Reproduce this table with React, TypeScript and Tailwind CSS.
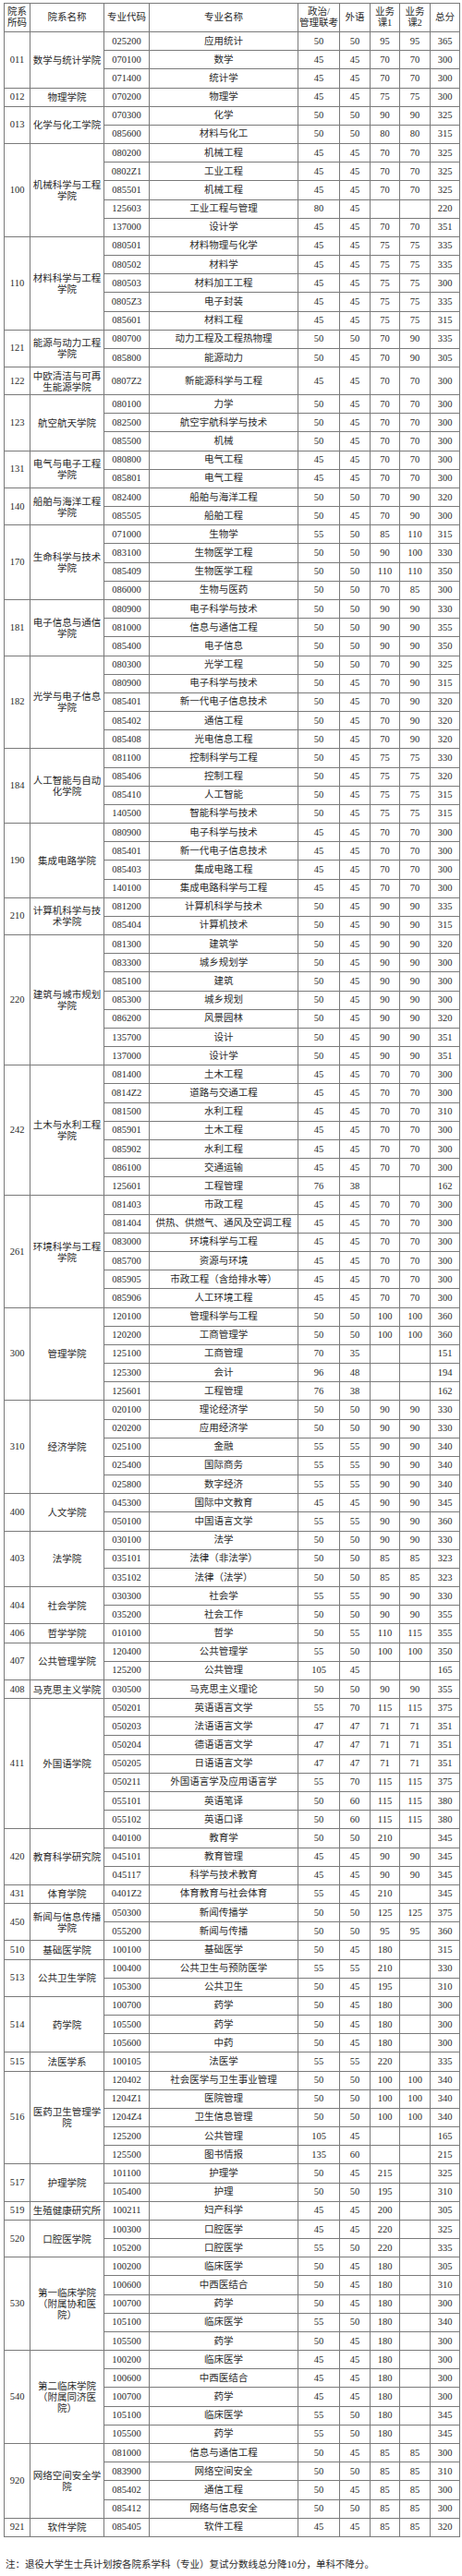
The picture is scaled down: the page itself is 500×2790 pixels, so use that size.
import React from 'react';

type Row = [string, string, string, string, string, string, string];

type Group = {
  code: string;
  name: string;
  rows: Row[];
};

// 每行：专业代码, 专业名称, 政治/管理联考, 外语, 业务课1, 业务课2, 总分
const groups: Group[] = [
  {
    code: '011',
    name: '数学与统计学院',
    rows: [
      ['025200', '应用统计', '50', '50', '95', '95', '365'],
      ['070100', '数学', '45', '45', '70', '70', '300'],
      ['071400', '统计学', '45', '45', '70', '70', '300'],
    ],
  },
  { code: '012', name: '物理学院', rows: [['070200', '物理学', '45', '45', '75', '75', '300']] },
  {
    code: '013',
    name: '化学与化工学院',
    rows: [
      ['070300', '化学', '50', '50', '90', '90', '325'],
      ['085600', '材料与化工', '50', '50', '80', '80', '315'],
    ],
  },
  {
    code: '100',
    name: '机械科学与工程学院',
    rows: [
      ['080200', '机械工程', '45', '45', '70', '70', '325'],
      ['0802Z1', '工业工程', '45', '45', '70', '70', '325'],
      ['085501', '机械工程', '45', '45', '70', '70', '325'],
      ['125603', '工业工程与管理', '80', '45', '', '', '220'],
      ['137000', '设计学', '45', '45', '70', '70', '351'],
    ],
  },
  {
    code: '110',
    name: '材料科学与工程学院',
    rows: [
      ['080501', '材料物理与化学', '45', '45', '75', '75', '335'],
      ['080502', '材料学', '45', '45', '75', '75', '335'],
      ['080503', '材料加工工程', '45', '45', '75', '75', '300'],
      ['0805Z3', '电子封装', '45', '45', '75', '75', '335'],
      ['085601', '材料工程', '45', '45', '75', '75', '315'],
    ],
  },
  {
    code: '121',
    name: '能源与动力工程学院',
    rows: [
      ['080700', '动力工程及工程热物理', '50', '50', '70', '90', '335'],
      ['085800', '能源动力', '50', '45', '70', '90', '305'],
    ],
  },
  {
    code: '122',
    name: '中欧清洁与可再生能源学院',
    rows: [['0807Z2', '新能源科学与工程', '45', '45', '70', '70', '300']],
  },
  {
    code: '123',
    name: '航空航天学院',
    rows: [
      ['080100', '力学', '50', '45', '70', '70', '300'],
      ['082500', '航空宇航科学与技术', '50', '45', '70', '70', '300'],
      ['085500', '机械', '50', '45', '70', '70', '300'],
    ],
  },
  {
    code: '131',
    name: '电气与电子工程学院',
    rows: [
      ['080800', '电气工程', '45', '45', '70', '70', '300'],
      ['085801', '电气工程', '45', '45', '70', '70', '300'],
    ],
  },
  {
    code: '140',
    name: '船舶与海洋工程学院',
    rows: [
      ['082400', '船舶与海洋工程', '50', '50', '70', '90', '320'],
      ['085505', '船舶工程', '50', '45', '70', '90', '300'],
    ],
  },
  {
    code: '170',
    name: '生命科学与技术学院',
    rows: [
      ['071000', '生物学', '55', '50', '85', '110', '315'],
      ['083100', '生物医学工程', '50', '50', '90', '100', '330'],
      ['085409', '生物医学工程', '50', '50', '110', '110', '350'],
      ['086000', '生物与医药', '50', '50', '70', '85', '300'],
    ],
  },
  {
    code: '181',
    name: '电子信息与通信学院',
    rows: [
      ['080900', '电子科学与技术', '50', '50', '90', '90', '330'],
      ['081000', '信息与通信工程', '50', '50', '90', '90', '355'],
      ['085400', '电子信息', '50', '50', '90', '90', '350'],
    ],
  },
  {
    code: '182',
    name: '光学与电子信息学院',
    rows: [
      ['080300', '光学工程', '50', '50', '70', '90', '325'],
      ['080900', '电子科学与技术', '50', '45', '70', '90', '315'],
      ['085401', '新一代电子信息技术', '50', '45', '70', '90', '320'],
      ['085402', '通信工程', '50', '45', '70', '90', '320'],
      ['085408', '光电信息工程', '50', '45', '70', '90', '320'],
    ],
  },
  {
    code: '184',
    name: '人工智能与自动化学院',
    rows: [
      ['081100', '控制科学与工程', '50', '45', '75', '75', '330'],
      ['085406', '控制工程', '50', '45', '75', '75', '320'],
      ['085410', '人工智能', '50', '45', '75', '75', '315'],
      ['140500', '智能科学与技术', '50', '45', '75', '75', '315'],
    ],
  },
  {
    code: '190',
    name: '集成电路学院',
    rows: [
      ['080900', '电子科学与技术', '45', '45', '70', '70', '300'],
      ['085401', '新一代电子信息技术', '45', '45', '70', '70', '300'],
      ['085403', '集成电路工程', '45', '45', '70', '70', '300'],
      ['140100', '集成电路科学与工程', '45', '45', '70', '70', '300'],
    ],
  },
  {
    code: '210',
    name: '计算机科学与技术学院',
    rows: [
      ['081200', '计算机科学与技术', '50', '45', '90', '90', '335'],
      ['085404', '计算机技术', '50', '45', '90', '90', '315'],
    ],
  },
  {
    code: '220',
    name: '建筑与城市规划学院',
    rows: [
      ['081300', '建筑学', '50', '45', '90', '90', '320'],
      ['083300', '城乡规划学', '50', '45', '90', '90', '300'],
      ['085100', '建筑', '50', '45', '90', '90', '300'],
      ['085300', '城乡规划', '50', '45', '90', '90', '300'],
      ['086200', '风景园林', '50', '45', '90', '90', '320'],
      ['135700', '设计', '50', '45', '90', '90', '351'],
      ['137000', '设计学', '50', '45', '90', '90', '351'],
    ],
  },
  {
    code: '242',
    name: '土木与水利工程学院',
    rows: [
      ['081400', '土木工程', '45', '45', '70', '70', '300'],
      ['0814Z2', '道路与交通工程', '45', '45', '70', '70', '300'],
      ['081500', '水利工程', '45', '45', '70', '70', '310'],
      ['085901', '土木工程', '45', '45', '70', '70', '300'],
      ['085902', '水利工程', '45', '45', '70', '70', '300'],
      ['086100', '交通运输', '45', '45', '70', '70', '300'],
      ['125601', '工程管理', '76', '38', '', '', '162'],
    ],
  },
  {
    code: '261',
    name: '环境科学与工程学院',
    rows: [
      ['081403', '市政工程', '45', '45', '70', '70', '300'],
      ['081404', '供热、供燃气、通风及空调工程', '45', '45', '70', '70', '300'],
      ['083000', '环境科学与工程', '45', '45', '70', '70', '300'],
      ['085700', '资源与环境', '45', '45', '70', '70', '300'],
      ['085905', '市政工程（含给排水等）', '45', '45', '70', '70', '300'],
      ['085906', '人工环境工程', '45', '45', '70', '70', '300'],
    ],
  },
  {
    code: '300',
    name: '管理学院',
    rows: [
      ['120100', '管理科学与工程', '50', '50', '100', '100', '360'],
      ['120200', '工商管理学', '50', '50', '100', '100', '360'],
      ['125100', '工商管理', '70', '35', '', '', '151'],
      ['125300', '会计', '96', '48', '', '', '194'],
      ['125601', '工程管理', '76', '38', '', '', '162'],
    ],
  },
  {
    code: '310',
    name: '经济学院',
    rows: [
      ['020100', '理论经济学', '50', '50', '90', '90', '330'],
      ['020200', '应用经济学', '50', '50', '90', '90', '330'],
      ['025100', '金融', '55', '55', '90', '90', '340'],
      ['025400', '国际商务', '55', '55', '90', '90', '340'],
      ['025800', '数字经济', '55', '55', '90', '90', '340'],
    ],
  },
  {
    code: '400',
    name: '人文学院',
    rows: [
      ['045300', '国际中文教育', '45', '45', '90', '90', '345'],
      ['050100', '中国语言文学', '55', '55', '90', '90', '360'],
    ],
  },
  {
    code: '403',
    name: '法学院',
    rows: [
      ['030100', '法学', '50', '50', '90', '90', '330'],
      ['035101', '法律（非法学）', '50', '50', '85', '85', '323'],
      ['035102', '法律（法学）', '50', '50', '85', '85', '323'],
    ],
  },
  {
    code: '404',
    name: '社会学院',
    rows: [
      ['030300', '社会学', '55', '55', '90', '90', '330'],
      ['035200', '社会工作', '50', '50', '90', '90', '355'],
    ],
  },
  { code: '406', name: '哲学学院', rows: [['010100', '哲学', '50', '55', '110', '115', '355']] },
  {
    code: '407',
    name: '公共管理学院',
    rows: [
      ['120400', '公共管理学', '55', '50', '100', '100', '350'],
      ['125200', '公共管理', '105', '45', '', '', '165'],
    ],
  },
  { code: '408', name: '马克思主义学院', rows: [['030500', '马克思主义理论', '50', '50', '90', '90', '355']] },
  {
    code: '411',
    name: '外国语学院',
    rows: [
      ['050201', '英语语言文学', '55', '70', '115', '115', '375'],
      ['050203', '法语语言文学', '47', '47', '71', '71', '351'],
      ['050204', '德语语言文学', '47', '47', '71', '71', '351'],
      ['050205', '日语语言文学', '47', '47', '71', '71', '351'],
      ['050211', '外国语言学及应用语言学', '55', '70', '115', '115', '375'],
      ['055101', '英语笔译', '50', '60', '115', '115', '380'],
      ['055102', '英语口译', '50', '60', '115', '115', '380'],
    ],
  },
  {
    code: '420',
    name: '教育科学研究院',
    rows: [
      ['040100', '教育学', '50', '50', '210', '', '345'],
      ['045101', '教育管理', '45', '45', '90', '90', '345'],
      ['045117', '科学与技术教育', '45', '45', '90', '90', '345'],
    ],
  },
  { code: '431', name: '体育学院', rows: [['0401Z2', '体育教育与社会体育', '55', '45', '210', '', '345']] },
  {
    code: '450',
    name: '新闻与信息传播学院',
    rows: [
      ['050300', '新闻传播学', '50', '50', '125', '125', '375'],
      ['055200', '新闻与传播', '50', '50', '95', '95', '360'],
    ],
  },
  { code: '510', name: '基础医学院', rows: [['100100', '基础医学', '50', '45', '180', '', '315']] },
  {
    code: '513',
    name: '公共卫生学院',
    rows: [
      ['100400', '公共卫生与预防医学', '55', '55', '210', '', '330'],
      ['105300', '公共卫生', '50', '45', '195', '', '310'],
    ],
  },
  {
    code: '514',
    name: '药学院',
    rows: [
      ['100700', '药学', '50', '45', '180', '', '300'],
      ['105500', '药学', '50', '45', '180', '', '300'],
      ['105600', '中药', '50', '45', '180', '', '300'],
    ],
  },
  { code: '515', name: '法医学系', rows: [['100105', '法医学', '55', '55', '220', '', '335']] },
  {
    code: '516',
    name: '医药卫生管理学院',
    rows: [
      ['120402', '社会医学与卫生事业管理', '50', '50', '100', '100', '340'],
      ['1204Z1', '医院管理', '50', '50', '100', '100', '340'],
      ['1204Z4', '卫生信息管理', '50', '50', '100', '100', '340'],
      ['125200', '公共管理', '105', '45', '', '', '165'],
      ['125500', '图书情报', '135', '60', '', '', '215'],
    ],
  },
  {
    code: '517',
    name: '护理学院',
    rows: [
      ['101100', '护理学', '50', '45', '215', '', '325'],
      ['105400', '护理', '50', '50', '195', '', '310'],
    ],
  },
  { code: '519', name: '生殖健康研究所', rows: [['100211', '妇产科学', '45', '45', '200', '', '305']] },
  {
    code: '520',
    name: '口腔医学院',
    rows: [
      ['100300', '口腔医学', '45', '45', '220', '', '325'],
      ['105200', '口腔医学', '55', '50', '220', '', '335'],
    ],
  },
  {
    code: '530',
    name: '第一临床学院（附属协和医院）',
    rows: [
      ['100200', '临床医学', '50', '45', '180', '', '305'],
      ['100600', '中西医结合', '50', '45', '180', '', '310'],
      ['100700', '药学', '50', '45', '180', '', '300'],
      ['105100', '临床医学', '55', '50', '180', '', '340'],
      ['105500', '药学', '50', '45', '180', '', '300'],
    ],
  },
  {
    code: '540',
    name: '第二临床学院（附属同济医院）',
    rows: [
      ['100200', '临床医学', '45', '45', '180', '', '300'],
      ['100600', '中西医结合', '45', '45', '180', '', '300'],
      ['100700', '药学', '45', '45', '180', '', '300'],
      ['105100', '临床医学', '55', '50', '180', '', '345'],
      ['105500', '药学', '55', '50', '180', '', '345'],
    ],
  },
  {
    code: '920',
    name: '网络空间安全学院',
    rows: [
      ['081000', '信息与通信工程', '50', '45', '85', '85', '300'],
      ['083900', '网络空间安全', '50', '50', '85', '85', '310'],
      ['085402', '通信工程', '50', '45', '85', '85', '300'],
      ['085412', '网络与信息安全', '50', '50', '85', '85', '300'],
    ],
  },
  { code: '921', name: '软件学院', rows: [['085405', '软件工程', '45', '45', '85', '85', '320']] },
];

const cell = 'border border-[#7a7a7a] p-0 text-center align-middle';

const App = () => {
  return (
    <div className="min-h-[2790px] bg-white pl-[4px] pt-[3px] text-[10.5px] text-[#2a2a2a] font-['Liberation_Serif','Noto_Sans_CJK_SC',serif]">
      <table className="w-[493px] table-fixed border-collapse border border-[#6e6e6e]">
        <colgroup>
          <col className="w-[28px]" />
          <col className="w-[80px]" />
          <col className="w-[49px]" />
          <col className="w-[161px]" />
          <col className="w-[45px]" />
          <col className="w-[33px]" />
          <col className="w-[32px]" />
          <col className="w-[33px]" />
          <col className="w-[32px]" />
        </colgroup>
        <thead>
          <tr className="h-[31px] leading-[12px]">
            <th className={`${cell} font-normal`}>院系<br />所码</th>
            <th className={`${cell} font-normal`}>院系名称</th>
            <th className={`${cell} font-normal`}>专业代码</th>
            <th className={`${cell} font-normal`}>专业名称</th>
            <th className={`${cell} font-normal`}>政治/<br />管理联考</th>
            <th className={`${cell} font-normal`}>外语</th>
            <th className={`${cell} font-normal`}>业务<br />课1</th>
            <th className={`${cell} font-normal`}>业务<br />课2</th>
            <th className={`${cell} font-normal`}>总分</th>
          </tr>
        </thead>
        <tbody>
          {groups.map((group) =>
            group.rows.map((row, i) => (
              <tr key={group.code + row[0] + i} className="h-[20.18px] leading-[12px]">
                {i === 0 && (
                  <>
                    <td rowSpan={group.rows.length} className={cell}>
                      {group.code}
                    </td>
                    <td
                      rowSpan={group.rows.length}
                      className={`${cell} px-[1px] py-[2.5px] font-['Noto_Sans_CJK_SC',sans-serif]`}
                    >
                      {group.name}
                    </td>
                  </>
                )}
                {row.map((value, j) => (
                  <td key={j} className={cell}>
                    {value}
                  </td>
                ))}
              </tr>
            ))
          )}
        </tbody>
      </table>
      <p className="mt-[23px] ml-[2px] leading-[14px]">
        注：退役大学生士兵计划按各院系学科（专业）复试分数线总分降10分，单科不降分。
      </p>
    </div>
  );
};

export default App;
